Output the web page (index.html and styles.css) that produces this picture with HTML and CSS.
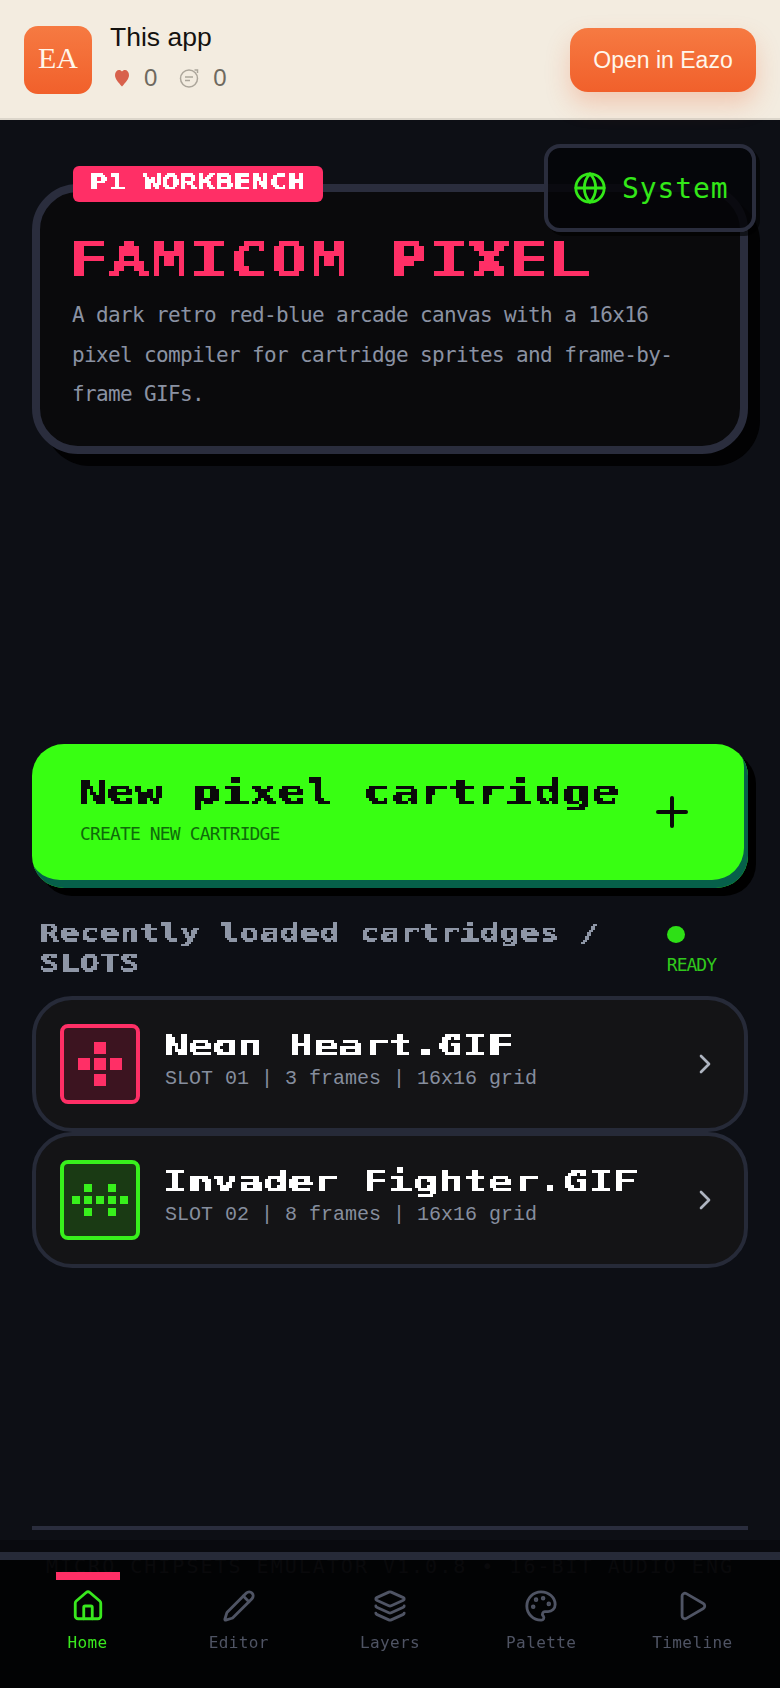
FILE: index.html
```html
<!DOCTYPE html>
<html>
  <head>
    <title>Famicom Pixel</title>
    <link rel="stylesheet" href="styles.css">
  </head>
  <body>
    <svg class="filters" width="0" height="0">
      <filter id="pixel-5" x="0" y="0" width="100%" height="100%" color-interpolation-filters="sRGB">
        <feFlood x="2" y="2" width="1" height="1" flood-color="#000"/>
        <feComposite width="5" height="5"/>
        <feTile result="dots"/>
        <feComposite in="SourceGraphic" in2="dots" operator="in"/>
        <feComponentTransfer><feFuncA type="discrete" tableValues="0 1 1"/></feComponentTransfer>
        <feMorphology operator="dilate" radius="2"/>
      </filter>
      <filter id="pixel-3" x="0" y="0" width="100%" height="100%" color-interpolation-filters="sRGB">
        <feFlood x="1" y="1" width="1" height="1" flood-color="#000"/>
        <feComposite width="3" height="3"/>
        <feTile result="dots"/>
        <feComposite in="SourceGraphic" in2="dots" operator="in"/>
        <feComponentTransfer><feFuncA type="discrete" tableValues="0 1 1"/></feComponentTransfer>
        <feMorphology operator="dilate" radius="1"/>
      </filter>
      <filter id="pixel-2" x="0" y="0" width="100%" height="100%" color-interpolation-filters="sRGB">
        <feFlood x="0" y="0" width="1" height="1" flood-color="#000"/>
        <feComposite width="2" height="2"/>
        <feTile result="dots"/>
        <feComposite in="SourceGraphic" in2="dots" operator="in"/>
        <feComponentTransfer result="a"><feFuncA type="discrete" tableValues="0 1 1"/></feComponentTransfer>
        <feOffset dx="1" dy="0" result="b"/>
        <feOffset in="a" dx="0" dy="1" result="c"/>
        <feOffset in="a" dx="1" dy="1" result="d"/>
        <feMerge><feMergeNode in="a"/><feMergeNode in="b"/><feMergeNode in="c"/><feMergeNode in="d"/></feMerge>
      </filter>
    </svg>

    <header class="app-bar">
      <div class="app-icon">EA</div>
      <div class="app-info">
        <p class="app-name">This app</p>
        <div class="app-stats">
          <svg class="stat-heart" viewBox="0 0 16 18"><path d="M8 17.500C4 13 1 10 1 6 1 3 3 1 5 1 6.300 1 7.400 1.600 8 2.600 8.600 1.600 9.700 1 11 1 13 1 15 3 15 6 15 10 12 13 8 17.500z"/></svg>
          <span class="stat-count">0</span>
          <svg class="stat-comment" viewBox="0 0 20 20"><circle cx="10" cy="10.500" r="8.500"/><path d="M15.500 2h3v3"/><path d="M6 9h8M6 12.500h5"/></svg>
          <span class="stat-count">0</span>
        </div>
      </div>
      <button class="open-button">Open in Eazo</button>
    </header>

    <button class="system-button">
      <svg class="icon system-icon" viewBox="0 0 24 24"><circle cx="12" cy="12" r="10"/><path d="M12 2a14.500 14.500 0 0 0 0 20 14.500 14.500 0 0 0 0-20"/><path d="M2 12h20"/></svg>
      System
    </button>

    <main class="content">
      <section class="hero">
        <div class="hero-badge"><p class="pixel pixel-fine badge-text"><span>P1 WORKBENCH</span></p></div>
        <h1 class="pixel pixel-big hero-title"><span>FAMICOM PIXEL</span></h1>
        <p class="hero-text">A dark retro red-blue arcade canvas with a 16x16 pixel compiler for cartridge sprites and frame-by-frame GIFs.</p>
      </section>

      <button class="new-button">
        <div class="new-labels">
          <p class="pixel new-title"><span>New pixel cartridge</span></p>
          <p class="new-sub">CREATE NEW CARTRIDGE</p>
        </div>
        <svg class="icon new-plus" viewBox="0 0 24 24"><path d="M5 12h14"/><path d="M12 5v14"/></svg>
      </button>

      <div class="section-head">
        <h2 class="pixel pixel-fine section-title"><span>Recently loaded cartridges /<br>SLOTS</span></h2>
        <div class="ready">
          <div class="ready-dot"></div>
          <p class="ready-text">READY</p>
        </div>
      </div>

      <div class="slot">
        <div class="thumb thumb-pink">
          <div class="dot-grid dot-grid-plus">
            <i></i><b></b><i></i>
            <b></b><b></b><b></b>
            <i></i><b></b><i></i>
          </div>
        </div>
        <div class="slot-labels">
          <p class="pixel slot-name"><span>Neon Heart.GIF</span></p>
          <p class="slot-meta">SLOT 01 | 3 frames | 16x16 grid</p>
        </div>
        <svg class="icon slot-arrow" viewBox="0 0 24 24"><path d="m9 18 6-6-6-6"/></svg>
      </div>

      <div class="slot">
        <div class="thumb thumb-green">
          <div class="dot-grid dot-grid-ship">
            <i></i><b></b><i></i><b></b><i></i>
            <b></b><b></b><b></b><b></b><b></b>
            <i></i><b></b><i></i><b></b><i></i>
          </div>
        </div>
        <div class="slot-labels">
          <p class="pixel slot-name"><span>Invader Fighter.GIF</span></p>
          <p class="slot-meta">SLOT 02 | 8 frames | 16x16 grid</p>
        </div>
        <svg class="icon slot-arrow" viewBox="0 0 24 24"><path d="m9 18 6-6-6-6"/></svg>
      </div>

      <div class="page-rule"></div>
    </main>

    <footer class="page-footer">MICRO CHIPSETS EMULATOR V1.0.8 &bull; 16-BIT AUDIO ENG</footer>

    <nav class="tab-bar">
      <div class="tab tab-active">
        <svg class="icon tab-icon" viewBox="0 0 24 24"><path d="M15 21v-8a1 1 0 0 0-1-1h-4a1 1 0 0 0-1 1v8"/><path d="M3 10a2 2 0 0 1 .709-1.528l7-5.999a2 2 0 0 1 2.582 0l7 5.999A2 2 0 0 1 21 10v9a2 2 0 0 1-2 2H5a2 2 0 0 1-2-2z"/></svg>
        Home
      </div>
      <div class="tab">
        <svg class="icon tab-icon" viewBox="0 0 24 24"><path d="M21.174 6.812a1 1 0 0 0-3.986-3.987L3.842 16.174a2 2 0 0 0-.5.83l-1.321 4.352a.5.5 0 0 0 .623.622l4.353-1.32a2 2 0 0 0 .83-.497z"/><path d="m15 5 4 4"/></svg>
        Editor
      </div>
      <div class="tab">
        <svg class="icon tab-icon" viewBox="0 0 24 24"><path d="M12.830 2.180a2 2 0 0 0-1.660 0L2.600 6.080a1 1 0 0 0 0 1.830l8.580 3.910a2 2 0 0 0 1.660 0l8.580-3.900a1 1 0 0 0 0-1.830z"/><path d="M2 12a1 1 0 0 0 .580.910l8.600 3.910a2 2 0 0 0 1.650 0l8.580-3.900A1 1 0 0 0 22 12"/><path d="M2 17a1 1 0 0 0 .580.910l8.600 3.910a2 2 0 0 0 1.650 0l8.580-3.900A1 1 0 0 0 22 17"/></svg>
        Layers
      </div>
      <div class="tab">
        <svg class="icon tab-icon" viewBox="0 0 24 24"><path d="M12 22a1 1 0 0 1 0-20 10 9 0 0 1 10 9 5 5 0 0 1-5 5h-2.250a1.750 1.750 0 0 0-1.400 2.800l.3.4a1.750 1.750 0 0 1-1.400 2.800z"/><circle class="palette-dot" cx="13.500" cy="6.500" r=".6"/><circle class="palette-dot" cx="17.500" cy="10.500" r=".6"/><circle class="palette-dot" cx="6.500" cy="12.500" r=".6"/><circle class="palette-dot" cx="8.500" cy="7.500" r=".6"/></svg>
        Palette
      </div>
      <div class="tab">
        <svg class="icon tab-icon" viewBox="0 0 24 24"><path d="M5 5a2 2 0 0 1 3.008-1.728l11.997 6.998a2 2 0 0 1 .003 3.458l-12 7A2 2 0 0 1 5 19z"/></svg>
        Timeline
      </div>
    </nav>
  </body>
</html>
```

FILE: styles.css
```css
* {
  box-sizing: border-box;
}

html,
body {
  margin: 0;
  height: 1688px;
  overflow: hidden;
}

body {
  position: relative;
  background-color: #0d0f15;
  font-family: "DejaVu Sans Mono", monospace;
}

p,
h1,
h2 {
  margin: 0;
  font-weight: normal;
}

button {
  font-family: inherit;
}

.filters {
  position: absolute;
}

.icon {
  fill: none;
  stroke: currentColor;
  stroke-width: 2;
  stroke-linecap: round;
  stroke-linejoin: round;
}

/* pixel font stand-in: wide bold mono, stepped by the svg filters */
.pixel {
  display: block;
  font-family: "DejaVu Sans Mono", monospace;
  font-weight: bold;
  filter: url(#pixel-3);
}

.pixel-big {
  filter: url(#pixel-5);
}

.pixel-fine {
  filter: url(#pixel-2);
}

.pixel span {
  display: inline-block;
  white-space: nowrap;
  transform: scaleX(1.384);
  transform-origin: 0 0;
}

/* top bar */
.app-bar {
  display: flex;
  align-items: center;
  height: 120px;
  padding: 2px 24px 0;
  background-color: #f3ece0;
  border-bottom: 2px solid #dcd6cb;
  font-family: "Liberation Sans", sans-serif;
}

.app-icon {
  width: 68px;
  height: 68px;
  border-radius: 14px;
  background: linear-gradient(#f67a42, #f1602b);
  color: #fff6ea;
  font-family: "Liberation Serif", serif;
  font-size: 30px;
  line-height: 64px;
  text-align: center;
}

.app-info {
  flex: 1;
  margin-left: 18px;
  padding-bottom: 10px;
}

.app-name {
  color: #14120f;
  font-size: 26.500px;
  line-height: 34px;
}

.app-stats {
  display: flex;
  align-items: center;
  height: 24px;
  margin-top: 12px;
  color: #6e695f;
  font-size: 24px;
}

.stat-heart {
  width: 16px;
  height: 18px;
  margin-left: 4px;
  fill: #d8614c;
}

.stat-comment {
  width: 20px;
  height: 20px;
  margin-left: 22px;
  fill: none;
  stroke: #aca69b;
  stroke-width: 1.500;
}

.stat-count {
  margin-left: 14px;
}

.open-button {
  width: 186px;
  height: 64px;
  border: none;
  border-radius: 18px;
  background: linear-gradient(#f67a42, #f1602b);
  color: #fff6ea;
  font-family: "Liberation Sans", sans-serif;
  font-size: 23px;
  box-shadow: 0 12px 24px rgba(241, 96, 43, 0.25);
}

.system-button {
  position: absolute;
  top: 144px;
  left: 544px;
  z-index: 2;
  display: flex;
  align-items: center;
  width: 212px;
  height: 88px;
  padding: 0 0 0 25px;
  border: 4px solid #2a2d3d;
  border-radius: 16px;
  background-color: rgba(5, 5, 8, 0.85);
  box-shadow: 4px 4px 0 rgba(0, 0, 0, 0.6);
  color: #33e818;
  font-size: 28px;
  letter-spacing: 0.9px;
}

.system-icon {
  width: 34px;
  height: 34px;
  margin-right: 15px;
}

/* main column */
.content {
  padding: 64px 32px 0;
}

.hero {
  position: relative;
  height: 270px;
  margin-bottom: 290px;
  padding: 44px 32px 0;
  border: 8px solid #2a2d3d;
  border-radius: 46px;
  background-color: #0a0a0c;
  box-shadow: 12px 12px 0 #020203;
}

.hero-badge {
  position: absolute;
  top: -26px;
  left: 33px;
  width: 250px;
  height: 36px;
  padding: 3px 0 0 16px;
  border-radius: 6px;
  background-color: #ff2f66;
}

.badge-text {
  color: #fff;
  font-size: 21.600px;
  line-height: 26px;
}

.hero-title {
  height: 48px;
  margin-left: -3px;
  color: #ff2f66;
  font-size: 48px;
  line-height: 48px;
}

.hero-text {
  margin-top: 12px;
  color: #8a92a3;
  font-size: 21px;
  line-height: 39.600px;
  letter-spacing: -0.640px;
}

/* green call to action */
.new-button {
  display: flex;
  align-items: center;
  justify-content: space-between;
  width: 716px;
  height: 144px;
  padding: 0 52px 8px 46px;
  border: none;
  border-radius: 32px;
  background-color: #38ff12;
  box-shadow: inset -4px -8px 0 #06604a, 8px 8px 0 #000;
  text-align: left;
}

.new-labels {
  margin-bottom: 8px;
}

.new-title {
  width: 560px;
  height: 42px;
  color: #0a0a0a;
  font-size: 34.200px;
  line-height: 42px;
}

.new-sub {
  margin: 10px 0 0 2px;
  color: #0f6b0a;
  font-size: 18px;
  line-height: 22px;
  letter-spacing: -0.860px;
}

.new-plus {
  width: 48px;
  height: 48px;
  color: #0a0a0a;
}

/* recent list */
.section-head {
  display: flex;
  justify-content: space-between;
  height: 60px;
  margin: 28px 0 20px;
  padding: 0 32px 0 7px;
}

.section-title {
  padding-top: 2px;
  color: #8e96a6;
  font-size: 24px;
  line-height: 30px;
}

.ready {
  display: flex;
  flex-direction: column;
  align-items: center;
}

.ready-dot {
  width: 18px;
  height: 18px;
  margin: 10px 0 0 -30px;
  border-radius: 50%;
  background-color: #2ee016;
}

.ready-text {
  margin-top: 11px;
  color: #30c81c;
  font-size: 18px;
  line-height: 22px;
  letter-spacing: -1px;
}

.slot {
  display: flex;
  align-items: center;
  height: 136px;
  padding: 0 24px;
  border: 4px solid #262a38;
  border-radius: 40px;
  background-color: #141416;
}

.thumb {
  flex: none;
  display: flex;
  align-items: center;
  justify-content: center;
  width: 80px;
  height: 80px;
  border: 4px solid;
  border-radius: 8px;
}

.thumb-pink {
  border-color: #ff2f66;
  background-color: #3c1420;
  color: #ff2f66;
}

.thumb-green {
  border-color: #38f01c;
  background-color: #1a3a14;
  color: #38f01c;
}

.dot-grid {
  display: grid;
  gap: 4px;
}

.dot-grid b {
  background-color: currentColor;
}

.dot-grid-plus {
  grid-template-columns: repeat(3, 12px);
  grid-auto-rows: 12px;
}

.dot-grid-ship {
  grid-template-columns: repeat(5, 8px);
  grid-auto-rows: 8px;
}

.slot-labels {
  flex: 1;
  margin: 0 0 9px 25px;
}

.slot-name {
  height: 36px;
  margin-left: -2px;
  color: #fff;
  font-size: 30px;
  line-height: 36px;
}

.slot-meta {
  margin-top: 3px;
  color: #868e9e;
  font-family: "Liberation Mono", monospace;
  font-size: 20px;
  line-height: 24px;
}

.slot-arrow {
  width: 32px;
  height: 32px;
  margin-right: -1px;
  color: #aeb4c0;
}

.page-rule {
  height: 4px;
  margin-top: 258px;
  background-color: #2a2d3d;
}

.page-footer {
  margin-top: 10px;
  height: 148px;
  padding-top: 14px;
  background-color: #090a0f;
  color: #1f2026;
  font-size: 20px;
  line-height: 24px;
  letter-spacing: 2px;
  white-space: nowrap;
  text-align: center;
}

/* bottom tabs */
.tab-bar {
  position: fixed;
  bottom: 0;
  left: 0;
  z-index: 3;
  display: grid;
  grid-template-columns: repeat(5, 1fr);
  width: 780px;
  height: 136px;
  padding: 0 12px;
  border-top: 8px solid #262a38;
  background-color: rgba(0, 0, 0, 0.7);
}

.tab {
  position: relative;
  display: flex;
  flex-direction: column;
  align-items: center;
  padding-top: 29px;
  color: #4f5464;
  font-size: 16px;
  line-height: 24px;
  letter-spacing: 0.400px;
}

.tab-icon {
  width: 34px;
  height: 34px;
  margin-bottom: 8px;
}

.palette-dot {
  fill: currentColor;
}

.tab-active {
  color: #39e81e;
}

.tab-active::before {
  content: "";
  position: absolute;
  top: 12px;
  left: 44px;
  width: 64px;
  height: 8px;
  background-color: #ff2f66;
}
```
